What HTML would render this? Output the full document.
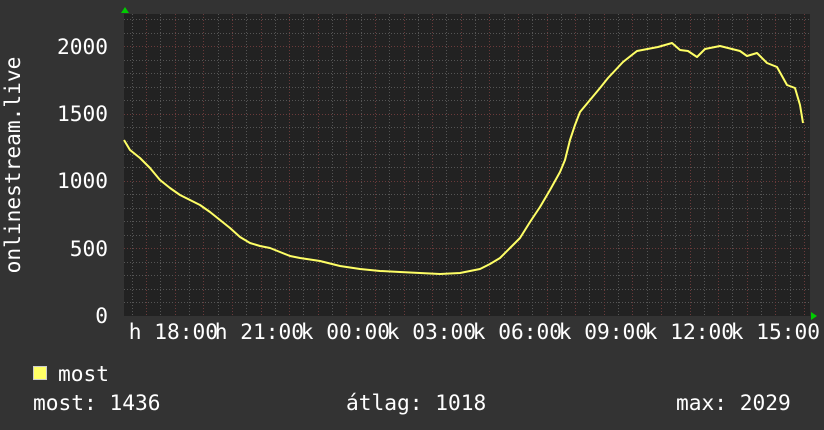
<!DOCTYPE html>
<html><head><style>
body{margin:0;background:#333333;width:824px;height:430px;overflow:hidden;font-family:"DejaVu Sans Mono","Liberation Mono",monospace;}
</style></head><body>
<svg width="824" height="430" xmlns="http://www.w3.org/2000/svg" style="position:absolute;left:0;top:0">
<rect x="0" y="0" width="824" height="430" fill="#333333"/>
<rect x="124" y="14" width="686" height="302" fill="#222222"/>
<g stroke="#555" stroke-width="1" stroke-dasharray="1,2" shape-rendering="crispEdges">
<line x1="124" x2="810" y1="19.5" y2="19.5"/><line x1="124" x2="810" y1="33.5" y2="33.5"/>
<line x1="124" x2="810" y1="60.5" y2="60.5"/><line x1="124" x2="810" y1="73.5" y2="73.5"/><line x1="124" x2="810" y1="87.5" y2="87.5"/><line x1="124" x2="810" y1="100.5" y2="100.5"/>
<line x1="124" x2="810" y1="127.5" y2="127.5"/><line x1="124" x2="810" y1="141.5" y2="141.5"/><line x1="124" x2="810" y1="154.5" y2="154.5"/><line x1="124" x2="810" y1="167.5" y2="167.5"/>
<line x1="124" x2="810" y1="194.5" y2="194.5"/><line x1="124" x2="810" y1="208.5" y2="208.5"/><line x1="124" x2="810" y1="221.5" y2="221.5"/><line x1="124" x2="810" y1="235.5" y2="235.5"/>
<line x1="124" x2="810" y1="262.5" y2="262.5"/><line x1="124" x2="810" y1="275.5" y2="275.5"/><line x1="124" x2="810" y1="289.5" y2="289.5"/><line x1="124" x2="810" y1="302.5" y2="302.5"/>
<line x1="132.5" x2="132.5" y1="14" y2="316"/><line x1="160.5" x2="160.5" y1="14" y2="316"/><line x1="189.5" x2="189.5" y1="14" y2="316"/><line x1="218.5" x2="218.5" y1="14" y2="316"/><line x1="246.5" x2="246.5" y1="14" y2="316"/><line x1="275.5" x2="275.5" y1="14" y2="316"/><line x1="303.5" x2="303.5" y1="14" y2="316"/><line x1="332.5" x2="332.5" y1="14" y2="316"/><line x1="361.5" x2="361.5" y1="14" y2="316"/><line x1="389.5" x2="389.5" y1="14" y2="316"/><line x1="418.5" x2="418.5" y1="14" y2="316"/><line x1="446.5" x2="446.5" y1="14" y2="316"/><line x1="475.5" x2="475.5" y1="14" y2="316"/><line x1="504.5" x2="504.5" y1="14" y2="316"/><line x1="532.5" x2="532.5" y1="14" y2="316"/><line x1="561.5" x2="561.5" y1="14" y2="316"/><line x1="589.5" x2="589.5" y1="14" y2="316"/><line x1="618.5" x2="618.5" y1="14" y2="316"/><line x1="647.5" x2="647.5" y1="14" y2="316"/><line x1="675.5" x2="675.5" y1="14" y2="316"/><line x1="704.5" x2="704.5" y1="14" y2="316"/><line x1="732.5" x2="732.5" y1="14" y2="316"/><line x1="761.5" x2="761.5" y1="14" y2="316"/><line x1="790.5" x2="790.5" y1="14" y2="316"/>
</g>
<g stroke="#6a3a3a" stroke-width="1" stroke-dasharray="1,2" shape-rendering="crispEdges">
<line x1="124" x2="810" y1="46.5" y2="46.5"/><line x1="124" x2="810" y1="114.5" y2="114.5"/><line x1="124" x2="810" y1="181.5" y2="181.5"/><line x1="124" x2="810" y1="248.5" y2="248.5"/>
<line x1="146.5" x2="146.5" y1="14" y2="316"/><line x1="175.5" x2="175.5" y1="14" y2="316"/><line x1="203.5" x2="203.5" y1="14" y2="316"/><line x1="232.5" x2="232.5" y1="14" y2="316"/><line x1="261.5" x2="261.5" y1="14" y2="316"/><line x1="289.5" x2="289.5" y1="14" y2="316"/><line x1="318.5" x2="318.5" y1="14" y2="316"/><line x1="346.5" x2="346.5" y1="14" y2="316"/><line x1="375.5" x2="375.5" y1="14" y2="316"/><line x1="404.5" x2="404.5" y1="14" y2="316"/><line x1="432.5" x2="432.5" y1="14" y2="316"/><line x1="461.5" x2="461.5" y1="14" y2="316"/><line x1="489.5" x2="489.5" y1="14" y2="316"/><line x1="518.5" x2="518.5" y1="14" y2="316"/><line x1="547.5" x2="547.5" y1="14" y2="316"/><line x1="575.5" x2="575.5" y1="14" y2="316"/><line x1="604.5" x2="604.5" y1="14" y2="316"/><line x1="632.5" x2="632.5" y1="14" y2="316"/><line x1="661.5" x2="661.5" y1="14" y2="316"/><line x1="690.5" x2="690.5" y1="14" y2="316"/><line x1="718.5" x2="718.5" y1="14" y2="316"/><line x1="747.5" x2="747.5" y1="14" y2="316"/><line x1="775.5" x2="775.5" y1="14" y2="316"/><line x1="804.5" x2="804.5" y1="14" y2="316"/>
</g>
<polyline fill="none" stroke="#ffff66" stroke-width="2" stroke-linejoin="round" points="
124,140 130,150 140,158 150,168 160,180 170,188 180,195 190,200 200,205 210,212 220,220 230,228 240,237 250,243 260,246 270,248 280,252 290,256 300,258 320,261 340,266 360,269 380,271 400,272 420,273 440,274 460,273 480,269 490,264 500,258 510,248 520,238 530,222 540,207 550,190 560,172 565,160 570,140 575,125 580,112 590,100 600,88 608,78 623,62 637,51 658,47 672,43 680,50 688,51 697,57 705,49 720,46 740,51 747,56 757,53 767,63 777,67 787,85 795,88 800,105 803,123"/>
<polygon points="121,13 125,7 129,13" fill="#00cc00"/>
<polygon points="811,312 817,316 811,320" fill="#00cc00"/>
<g fill="#ffffff" font-family="DejaVu Sans Mono, Liberation Mono, monospace" font-size="21.2">
<text x="108" y="54" text-anchor="end">2000</text>
<text x="108" y="121" text-anchor="end">1500</text>
<text x="108" y="188" text-anchor="end">1000</text>
<text x="108" y="256" text-anchor="end">500</text>
<text x="108" y="323" text-anchor="end">0</text>
<text transform="translate(20,165) rotate(-90)" text-anchor="middle">onlinestream.live</text>
<text x="218" y="339" text-anchor="end">h 18:00</text>
<text x="304" y="339" text-anchor="end">h 21:00</text>
<text x="390" y="339" text-anchor="end">k 00:00</text>
<text x="476" y="339" text-anchor="end">k 03:00</text>
<text x="562" y="339" text-anchor="end">k 06:00</text>
<text x="648" y="339" text-anchor="end">k 09:00</text>
<text x="734" y="339" text-anchor="end">k 12:00</text>
<text x="820" y="339" text-anchor="end">k 15:00</text>
<text x="58" y="381">most</text>
<text x="33" y="410">most: 1436</text>
<text x="346" y="410">átlag: 1018</text>
<text x="676" y="410">max: 2029</text>
</g>
<rect x="33.5" y="366.5" width="13" height="13" fill="#ffff66" stroke="#cccccc"/>
</svg>
</body></html>
